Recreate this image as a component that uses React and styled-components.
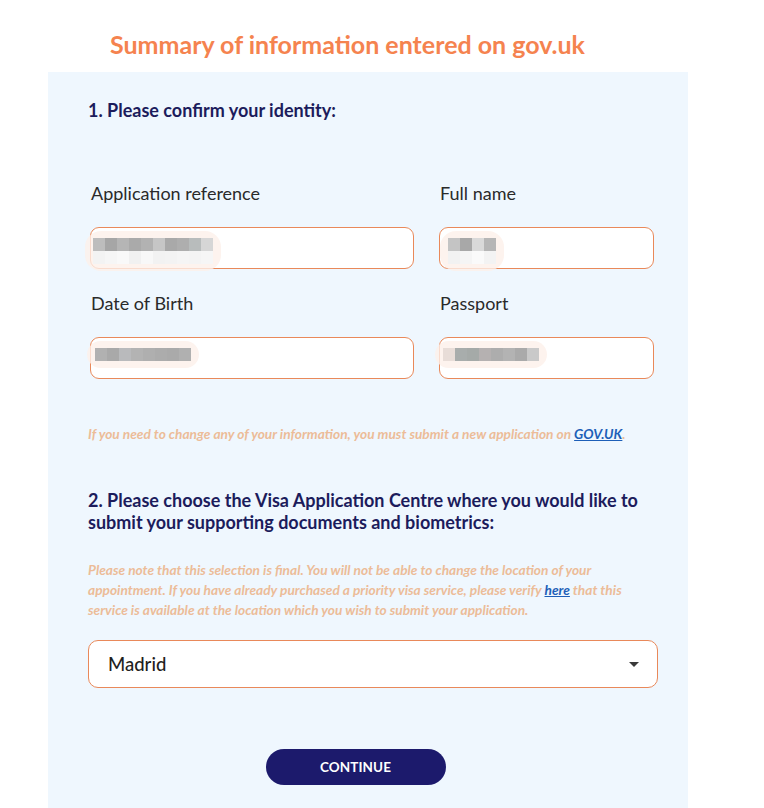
import React from "react";
import styled, { createGlobalStyle } from "styled-components";

const GlobalStyle = createGlobalStyle`
  html, body {
    margin: 0;
    padding: 0;
    background: #ffffff;
  }
  body {
    font-family: "Lato", "Open Sans", sans-serif;
  }
`;

const Page = styled.div`
  width: 764px;
  min-height: 808px;
  padding-top: 26px;
  box-sizing: border-box;
`;

const Title = styled.h1`
  margin: 0 0 0 110px;
  font-size: 25px;
  line-height: 36px;
  font-weight: 700;
  color: #f5834f;
`;

const Panel = styled.div`
  margin: 10px 0 0 48px;
  width: 640px;
  min-height: 736px;
  background: #eff7fe;
  padding: 27px 30px 20px 40px;
  box-sizing: border-box;
`;

const SectionHeading = styled.h2`
  margin: ${(p) => p.$mt || 0}px 0 0 0;
  font-size: 18px;
  line-height: 22px;
  font-weight: 700;
  color: #1c1c5c;
`;

const FieldGrid = styled.div`
  display: grid;
  grid-template-columns: 324px 215px;
  column-gap: 25px;
  row-gap: 23px;
  margin: 61px 0 0 2px;
`;

const Field = styled.div`
  display: flex;
  flex-direction: column;
`;

const Label = styled.label`
  font-size: 18px;
  line-height: 22px;
  color: #2a2a2a;
  margin-left: 1px;
  margin-bottom: 23px;
`;

const InputBox = styled.div`
  position: relative;
  height: 42px;
  border: 1px solid #e9895a;
  border-radius: 9px;
  background: #ffffff;
  box-sizing: border-box;
`;

const Redaction = styled.div`
  position: absolute;
  left: ${(p) => p.$left}px;
  top: 3px;
  display: flex;
  flex-direction: column;
  padding: 7px 8px;
  background: rgba(253, 240, 234, 0.8);
  border-radius: 16px;
  filter: blur(0.4px);
`;

const BlockRow = styled.div`
  display: flex;
`;

const Block = styled.span`
  width: ${(p) => p.$w || 12}px;
  height: 13px;
  background: ${(p) => p.$c};
`;

const Note = styled.p`
  margin: ${(p) => p.$mt || 0}px 0 0 0;
  font-size: 13.7px;
  line-height: 20px;
  font-style: italic;
  font-weight: 700;
  color: #ecbc98;
  max-width: 550px;
`;

const NoteLink = styled.a`
  color: #1d5fb8;
  text-decoration: underline;
`;

const SelectBox = styled.div`
  margin-top: 20px;
  height: 48px;
  width: 570px;
  border: 1px solid #e9895a;
  border-radius: 10px;
  background: #ffffff;
  box-sizing: border-box;
  display: flex;
  align-items: center;
  justify-content: space-between;
  padding: 0 18px 0 19px;
`;

const SelectValue = styled.span`
  font-size: 18.5px;
  font-weight: 500;
  color: #1e1e1e;
`;

const Caret = styled.span`
  width: 0;
  height: 0;
  border-left: 5px solid transparent;
  border-right: 5px solid transparent;
  border-top: 5px solid #3a3a3a;
`;

const ButtonRow = styled.div`
  display: flex;
  justify-content: center;
  width: 535px;
  margin-top: 61px;
`;

const ContinueButton = styled.button`
  width: 180px;
  height: 36px;
  border: none;
  border-radius: 18px;
  background: #1c1a6c;
  color: #ffffff;
  font-family: "Lato", sans-serif;
  font-size: 13.5px;
  font-weight: 700;
  letter-spacing: 0.1px;
  cursor: pointer;
`;

const fields = [
  {
    label: "Application reference",
    left: -6,
    top: ["#bdbdbd", "#a6a6a6", "#b5b5b5", "#aaaaaa", "#b2b2b2", "#c6c6c6", "#a9a9a9", "#aeaeae", "#b8bcbc", "#d6d6d6"],
    bottom: ["#f3f3f3", "#f6f6f6", "#f9f9f9", "#f1f1f1", "#f8f8f8", "#f2f2f2", "#f3f3f3", "#f5f5f5", "#f4f4f4", "#f6f6f6"],
  },
  {
    label: "Full name",
    left: 0,
    top: ["#c4c4c4", "#a8a8a8", "#d9d9d9", "#b6b6b6"],
    bottom: ["#f2f2f2", "#f5f5f5", "#fafafa", "#f3f3f3"],
  },
  {
    label: "Date of Birth",
    left: -4,
    top: ["#b1b1b1", "#a9a9a9", "#b9babc", "#b3b3b3", "#afafaf", "#acacac", "#aaaaaa", "#b0b0b0"],
  },
  {
    label: "Passport",
    left: -5,
    top: ["#e8ddd8", "#a8adac", "#a5aaa8", "#b5b1b1", "#adadad", "#b3b3b3", "#aaaaaa", "#c9c9c9"],
  },
];

function RedactedInput({ field }) {
  return (
    <InputBox>
      <Redaction $left={field.left}>
        <BlockRow>
          {field.top.map((c, i) => (
            <Block key={i} $c={c} />
          ))}
        </BlockRow>
        {field.bottom && (
          <BlockRow>
            {field.bottom.map((c, i) => (
              <Block key={i} $c={c} />
            ))}
          </BlockRow>
        )}
      </Redaction>
    </InputBox>
  );
}

export default function App() {
  return (
    <>
      <GlobalStyle />
      <Page>
        <Title>Summary of information entered on gov.uk</Title>
        <Panel>
          <SectionHeading>1. Please confirm your identity:</SectionHeading>

          <FieldGrid>
            {fields.map((f) => (
              <Field key={f.label}>
                <Label>{f.label}</Label>
                <RedactedInput field={f} />
              </Field>
            ))}
          </FieldGrid>

          <Note $mt={45}>
            If you need to change any of your information, you must submit a
            new application on <NoteLink href="#">GOV.UK</NoteLink>.
          </Note>

          <SectionHeading $mt={45}>
            2. Please choose the Visa Application Centre where you would like to
            submit your supporting documents and biometrics:
          </SectionHeading>

          <Note $mt={27}>
            Please note that this selection is final. You will not be able to
            change the location of your appointment. If you have already
            purchased a priority visa service, please verify{" "}
            <NoteLink href="#">here</NoteLink> that this service is available at
            the location which you wish to submit your application.
          </Note>

          <SelectBox>
            <SelectValue>Madrid</SelectValue>
            <Caret />
          </SelectBox>

          <ButtonRow>
            <ContinueButton>CONTINUE</ContinueButton>
          </ButtonRow>
        </Panel>
      </Page>
    </>
  );
}
